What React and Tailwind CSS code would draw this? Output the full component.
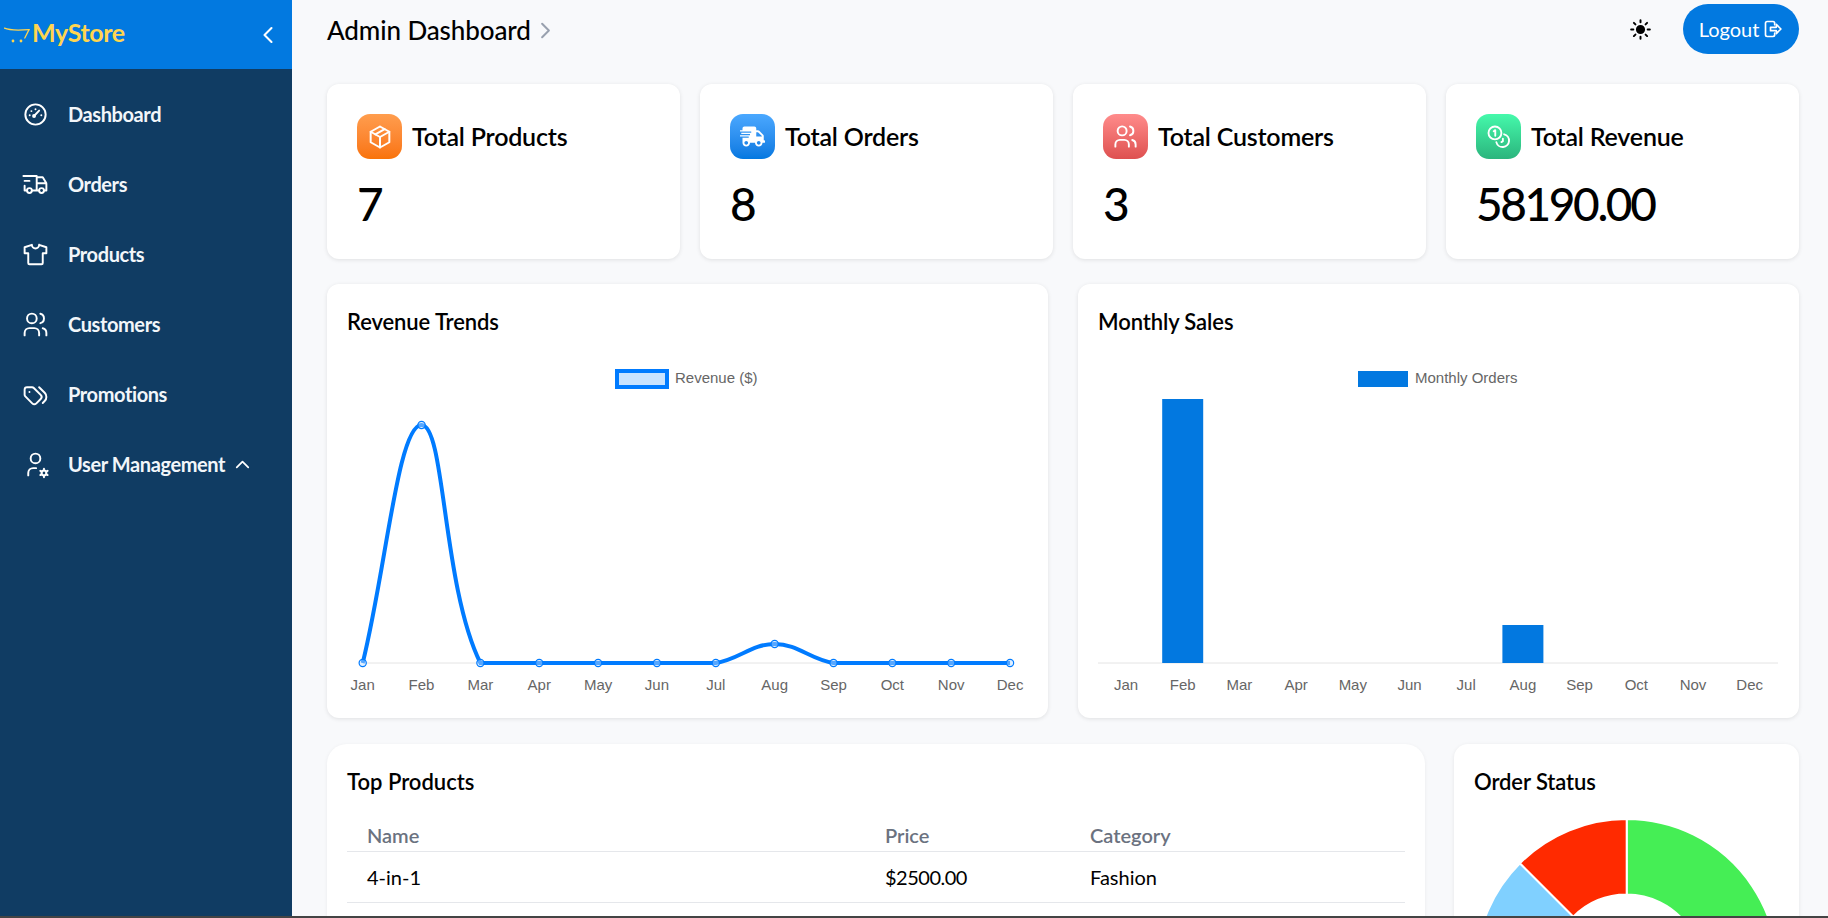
import React from "react";
import {
  TbTruckDelivery, TbShirt, TbUsers, TbTags, TbUserCog, TbChevronLeft, TbChevronUp, TbChevronRight, TbPackage,
} from "react-icons/tb";
import { FaShippingFast } from "react-icons/fa";
import { IoSunny } from "react-icons/io5";

const FONT = "font-['Lato','Noto_Sans',sans-serif]";
const MONTHS = ["Jan", "Feb", "Mar", "Apr", "May", "Jun", "Jul", "Aug", "Sep", "Oct", "Nov", "Dec"];

function GaugeIcon({ className }) {
  return (
    <svg viewBox="0 0 24 24" fill="none" stroke="currentColor" strokeWidth="1.7" strokeLinecap="round" className={className}>
      <circle cx="12" cy="12" r="8.4" />
      <path d="M11 13 15 8.8" />
      <circle cx="10.8" cy="13.2" r="0.8" />
      <path d="M7.2 12.6h.01M8.6 9.2h.01M12 7.6h.01M16.8 12.6h.01" />
    </svg>
  );
}

function CoinsIcon({ className }) {
  return (
    <svg viewBox="0 0 24 24" fill="none" stroke="currentColor" strokeWidth="1.8" strokeLinecap="round" strokeLinejoin="round" className={className}>
      <circle cx="8.6" cy="8.6" r="6.2" />
      <path d="M7.4 6.9 8.9 5.9v5.4" />
      <path d="M17.4 9.9a6.2 6.2 0 1 1-7.5 7.5" />
      <path d="M16.2 14.2v2.4l-1.4.8" />
    </svg>
  );
}

function LogoutIcon({ className }) {
  return (
    <svg viewBox="0 0 24 24" fill="none" stroke="currentColor" strokeWidth="2" strokeLinejoin="round" strokeLinecap="round" className={className}>
      <path d="M14 7V5a2 2 0 0 0-2-2H5a2 2 0 0 0-2 2v14a2 2 0 0 0 2 2h7a2 2 0 0 0 2-2v-2" />
      <path d="M9 10h7V6.5l5.5 5.5-5.5 5.5V14H9z" />
    </svg>
  );
}

function CartLogo() {
  return (
    <svg viewBox="0 0 26 16" fill="none" className="w-[26px] h-[16px] shrink-0">
      <path d="M0.5 1.2C5 3.2 12 3.6 25 2.6" stroke="#ffd54f" strokeWidth="1.3" strokeLinecap="round" />
      <path d="M25 2.6 20.8 11" stroke="#ffd54f" strokeWidth="1.3" strokeLinecap="round" />
      <circle cx="9" cy="14" r="1.4" fill="#ffd54f" />
      <circle cx="17" cy="14" r="1.4" fill="#ffd54f" />
    </svg>
  );
}

const NAV = [
  { label: "Dashboard", icon: GaugeIcon },
  { label: "Orders", icon: TbTruckDelivery },
  { label: "Products", icon: TbShirt },
  { label: "Customers", icon: TbUsers },
  { label: "Promotions", icon: TbTags },
  { label: "User Management", icon: TbUserCog, caret: true },
];

function Sidebar() {
  return (
    <aside className="w-[292px] shrink-0 bg-[#103c63] flex flex-col">
      <div className="h-[69px] bg-[#0279e0] flex items-center pl-[4px] pr-[10px]">
        <CartLogo />
        <span className="ml-[2px] mb-[4px] text-[25px] font-bold text-[#ffd54f] tracking-[-0.4px]">MyStore</span>
        <TbChevronLeft className="ml-auto w-[28px] h-[28px] text-white stroke-[1.8px]" />
      </div>
      <nav className="flex flex-col pt-[10px]">
        {NAV.map((n) => {
          const Icon = n.icon;
          return (
            <div key={n.label} className="h-[70px] flex items-center pl-[21px] text-white">
              <Icon className="w-[29px] h-[29px] shrink-0 stroke-[1.6px]" />
              <span className="ml-[18px] mb-[1px] text-[20px] font-bold tracking-[-0.4px] text-[#f2f6fa]">{n.label}</span>
              {n.caret && <TbChevronUp className="ml-[6px] w-[23px] h-[23px] stroke-[1.8px]" />}
            </div>
          );
        })}
      </nav>
    </aside>
  );
}

function StatCard({ title, value, grad, icon: Icon, iconClass }) {
  return (
    <div className="bg-white rounded-[12px] shadow-[0_1px_4px_rgba(0,0,0,0.1)] h-[175px] pl-[30px] pt-[30px]">
      <div className="flex items-center gap-[10px]">
        <div className={`w-[45px] h-[45px] rounded-[13px] flex items-center justify-center text-white ${grad}`}>
          <Icon className={iconClass} />
        </div>
        <span className="text-[25px] font-semibold text-black tracking-[-0.2px]">{title}</span>
      </div>
      <div className="mt-[15px] text-[46px] leading-[60px] font-medium text-black tracking-[-2.4px]">{value}</div>
    </div>
  );
}

// Chart.js style spline through pixel points, capped at the chart's baseline
function spline(pts, t, maxY) {
  const n = pts.length;
  const ctrl = pts.map((p, i) => {
    const p0 = pts[Math.max(i - 1, 0)];
    const p2 = pts[Math.min(i + 1, n - 1)];
    const d01 = Math.hypot(p[0] - p0[0], p[1] - p0[1]);
    const d12 = Math.hypot(p2[0] - p[0], p2[1] - p[1]);
    const s = d01 + d12 || 1;
    const fa = (t * d01) / s;
    const fb = (t * d12) / s;
    return {
      prev: [p[0] - fa * (p2[0] - p0[0]), Math.min(maxY, p[1] - fa * (p2[1] - p0[1]))],
      next: [p[0] + fb * (p2[0] - p0[0]), Math.min(maxY, p[1] + fb * (p2[1] - p0[1]))],
    };
  });
  let d = `M${pts[0][0]} ${pts[0][1]}`;
  for (let i = 1; i < n; i++) {
    d += ` C${ctrl[i - 1].next[0]} ${ctrl[i - 1].next[1]} ${ctrl[i].prev[0]} ${ctrl[i].prev[1]} ${pts[i][0]} ${pts[i][1]}`;
  }
  return d;
}

const chartFont = "'Liberation Sans', Arial, sans-serif";

function RevenueChart() {
  // svg origin: x 347, y 350 on the page
  const base = 313;
  const ys = [base, 75, base, base, base, base, base, 294, base, base, base, base];
  const pts = ys.map((y, i) => [15.7 + i * 58.85, y]);
  return (
    <svg viewBox="0 0 681 352" className="w-[681px] h-[352px] block mt-[14px]">
      <rect x="270" y="21" width="50" height="16" fill="#c8e3ff" stroke="#007bff" strokeWidth="4" />
      <text x="328" y="33" fontSize="15" fill="#666" fontFamily={chartFont}>Revenue ($)</text>
      <line x1={15.7} x2={pts[11][0]} y1={base} y2={base} stroke="#e4e4e4" strokeWidth="1" />
      <path d={spline(pts, 0.4, base)} fill="none" stroke="#007bff" strokeWidth="4" />
      {pts.map((p, i) => (
        <circle key={i} cx={p[0]} cy={p[1]} r="3.6" fill="rgba(190,222,255,0.45)" stroke="#007bff" strokeWidth="1.2" />
      ))}
      {pts.map((p, i) => (
        <text key={MONTHS[i]} x={p[0]} y={340} fontSize="15" fill="#666" textAnchor="middle" fontFamily={chartFont}>{MONTHS[i]}</text>
      ))}
    </svg>
  );
}

function SalesChart() {
  // svg origin: x 1098, y 350 on the page
  const base = 313;
  const x = (i) => 28 + i * 56.7;
  return (
    <svg viewBox="0 0 681 352" className="w-[681px] h-[352px] block mt-[14px]">
      <rect x="260" y="21" width="50" height="16" fill="#0278e0" />
      <text x="317" y="33" fontSize="15" fill="#666" fontFamily={chartFont}>Monthly Orders</text>
      <line x1="0" x2="680" y1={base} y2={base} stroke="#e4e4e4" strokeWidth="1" />
      <rect x={x(1) - 20.5} y="49" width="41" height={base - 49} fill="#0278e0" />
      <rect x={x(7) - 20.5} y="275" width="41" height={base - 275} fill="#0278e0" />
      {MONTHS.map((m, i) => (
        <text key={m} x={x(i)} y={340} fontSize="15" fill="#666" textAnchor="middle" fontFamily={chartFont}>{m}</text>
      ))}
    </svg>
  );
}

function slice(cx, cy, r, ir, a0, a1) {
  const pt = (rad, a) => {
    const t = ((a - 90) * Math.PI) / 180;
    return `${cx + rad * Math.cos(t)} ${cy + rad * Math.sin(t)}`;
  };
  const large = a1 - a0 > 180 ? 1 : 0;
  return `M${pt(r, a0)} A${r} ${r} 0 ${large} 1 ${pt(r, a1)} L${pt(ir, a1)} A${ir} ${ir} 0 ${large} 0 ${pt(ir, a0)} Z`;
}

function Doughnut() {
  const segs = [
    [0, 225, "#45ee55"],
    [225, 315, "#80d0ff"],
    [315, 360, "#ff2a00"],
  ];
  return (
    <svg viewBox="0 0 305 310" className="w-[305px] h-[310px] block">
      {segs.map(([a, b, c]) => (
        <path key={c} d={slice(152.7, 154, 151, 75.5, a, b)} fill={c} stroke="#fff" strokeWidth="2" />
      ))}
    </svg>
  );
}

function ChartCard({ title, children }) {
  return (
    <div className="bg-white rounded-[12px] shadow-[0_1px_4px_rgba(0,0,0,0.1)] h-[434px] px-[20px] pt-[24px] overflow-hidden">
      <h2 className="text-[22px] leading-[28px] font-semibold text-black tracking-[-0.1px]">{title}</h2>
      {children}
    </div>
  );
}

function App() {
  return (
    <div className={`h-[918px] w-[1828px] overflow-hidden flex flex-col bg-[#f8f9fb] ${FONT}`}>
      <div className="flex-1 min-h-0 flex">
        <Sidebar />
        <main className="flex-1 min-w-0 pl-[35px] pr-[29px] overflow-hidden">
          <header className="h-[84px] flex items-start">
            <div className="h-[61px] flex items-center">
              <h1 className="text-[26px] font-medium text-black tracking-[-0.1px]">Admin Dashboard</h1>
              <TbChevronRight className="ml-[1px] w-[27px] h-[27px] text-gray-400 stroke-[1.8px]" />
            </div>
            <div className="ml-auto flex items-center pt-[4px]">
              <IoSunny className="w-[23px] h-[23px] text-black mr-[31px]" />
              <button className="w-[116px] h-[50px] rounded-full bg-[#0279e0] text-white text-[20px] flex items-center justify-center gap-[4px]">
                Logout
                <LogoutIcon className="w-[20px] h-[20px]" />
              </button>
            </div>
          </header>

          <section className="grid grid-cols-4 gap-[20px]">
            <StatCard title="Total Products" value="7" grad="bg-gradient-to-b from-[#ff9d4d] to-[#f97306]" icon={TbPackage} iconClass="w-[28px] h-[28px] stroke-[1.7px]" />
            <StatCard title="Total Orders" value="8" grad="bg-gradient-to-b from-[#4aa8ff] to-[#0278e0]" icon={FaShippingFast} iconClass="w-[25px] h-[25px]" />
            <StatCard title="Total Customers" value="3" grad="bg-gradient-to-b from-[#ff8b8b] to-[#de5050]" icon={TbUsers} iconClass="w-[27px] h-[27px] stroke-[1.7px]" />
            <StatCard title="Total Revenue" value="58190.00" grad="bg-gradient-to-b from-[#45f9ab] to-[#2bb57d]" icon={CoinsIcon} iconClass="w-[25px] h-[25px]" />
          </section>

          <section className="grid grid-cols-2 gap-[30px] mt-[25px]">
            <ChartCard title="Revenue Trends"><RevenueChart /></ChartCard>
            <ChartCard title="Monthly Sales"><SalesChart /></ChartCard>
          </section>

          <section className="flex gap-[29px] mt-[26px]">
            <div className="w-[1098px] shrink-0 bg-white rounded-[20px] shadow-[0_1px_4px_rgba(0,0,0,0.06)] px-[20px] pt-[24px] h-[300px]">
              <h2 className="text-[22px] leading-[28px] font-semibold text-black tracking-[0px]">Top Products</h2>
              <table className="w-full mt-[23px] text-left border-collapse">
                <thead>
                  <tr className="border-b border-[#e5e7eb] h-[32px]">
                    <th className="pl-[20px] w-[538px] text-[20px] font-semibold text-[#6b7280]">Name</th>
                    <th className="w-[205px] text-[20px] font-semibold text-[#6b7280]">Price</th>
                    <th className="text-[20px] font-semibold text-[#6b7280]">Category</th>
                  </tr>
                </thead>
                <tbody>
                  <tr className="border-b border-[#e5e7eb] h-[51px]">
                    <td className="pl-[20px] pt-[1px] text-[20px] text-black">4-in-1</td>
                    <td className="pt-[1px] text-[20px] text-black tracking-[-0.5px]">$2500.00</td>
                    <td className="pt-[1px] text-[20px] text-black">Fashion</td>
                  </tr>
                </tbody>
              </table>
            </div>
            <div className="w-[345px] shrink-0 bg-white rounded-[14px] shadow-[0_1px_4px_rgba(0,0,0,0.08)] px-[20px] pt-[24px] h-[300px]">
              <h2 className="text-[22px] leading-[28px] font-semibold text-black tracking-[-0.1px]">Order Status</h2>
              <div className="mt-[20px]"><Doughnut /></div>
            </div>
          </section>
        </main>
      </div>
      <div className="h-[2px] shrink-0 bg-[#444]" />
    </div>
  );
}

export default App;
